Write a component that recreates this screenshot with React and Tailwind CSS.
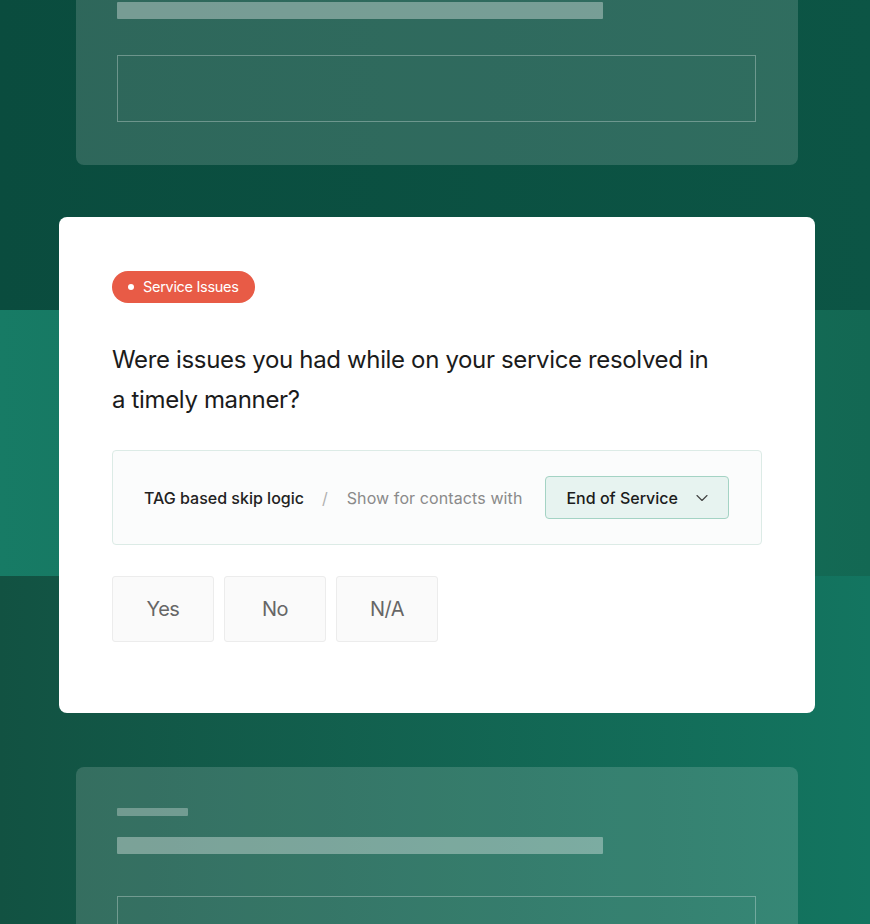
import React from 'react';
import { ChevronDown } from 'lucide-react';

const ANSWERS = ['Yes', 'No', 'N/A'];

// faded card placeholder shown above and below the active question
function GhostCard({ className = '', barGap = 'mt-[42px]' }) {
  return (
    <div className={`ml-[76px] w-[722px] shrink-0 rounded-lg bg-white/15 px-[41px] pt-[41px] pb-[43px] ${className}`}>
      <div className="h-[8px] w-[71px] rounded-[1px] bg-white/30" />
      <div className="mt-[21px] h-[17px] w-[486px] rounded-[1px] bg-white/35" />
      <div className={`${barGap} h-[67px] w-[639px] border border-white/30`} />
    </div>
  );
}

export default function App() {
  return (
    <div
      className="flex h-[924px] w-full flex-col overflow-hidden [background:linear-gradient(90deg,#0a4c3e,#0c5545)_0_0/100%_310px_no-repeat,linear-gradient(90deg,#177b65,#136853)_0_310px/100%_266px_no-repeat,linear-gradient(90deg,#125242,#137560)_0_576px/100%_348px_no-repeat]"
      style={{ fontFamily: 'Inter, "Noto Sans", sans-serif' }}
    >
      <GhostCard className="-mt-[68px]" barGap="mt-[36px]" />

      {/* Card: active question */}
      <div className="ml-[59px] mt-[52px] w-[756px] shrink-0 rounded-lg bg-white px-[53px] pt-[54px] pb-[71px]">
        <div className="inline-flex h-[32px] items-center gap-[9px] rounded-full bg-[#e85b46] pl-[16px] pr-[16px] text-[14.5px] tracking-[-0.3px] text-white">
          <span className="h-[6px] w-[6px] rounded-full bg-white" />
          Service Issues
        </div>

        <h2 className="mt-[37px] text-[24px] leading-[40px] tracking-[-0.35px] text-[#1b1b1b]">
          Were issues you had while on your service resolved in
          <br />
          a timely manner?
        </h2>

        {/* skip logic row */}
        <div className="mt-[30px] flex h-[95px] items-center rounded-[4px] border border-[#dcebe6] bg-[#fbfcfc] pl-[31px]">
          <span className="text-[16px] font-medium text-[#222]">TAG based skip logic</span>
          <span className="ml-[18px] mr-[19px] text-[16px] text-[#b0b0b0]">/</span>
          <span className="text-[16px] tracking-[0.1px] text-[#8a8a8a]">Show for contacts with</span>
          <div className="ml-[23px] flex h-[43px] w-[184px] items-center justify-between rounded-[4px] border border-[#a4d3c4] bg-[#e7f3f0] pl-[20px] pr-[16px]">
            <span className="text-[16px] font-medium text-[#1b1b1b]">End of Service</span>
            <ChevronDown size={20} strokeWidth={1.4} className="text-[#444]" />
          </div>
        </div>

        <div className="mt-[31px] flex gap-[10px]">
          {ANSWERS.map((a) => (
            <div
              key={a}
              className="flex h-[66px] w-[102px] items-center justify-center rounded-[3px] border border-[#ececec] bg-[#fafafa] text-[20px] tracking-[-0.5px] text-[#666]"
            >
              {a}
            </div>
          ))}
        </div>
      </div>

      <GhostCard className="mt-[54px]" />
    </div>
  );
}
